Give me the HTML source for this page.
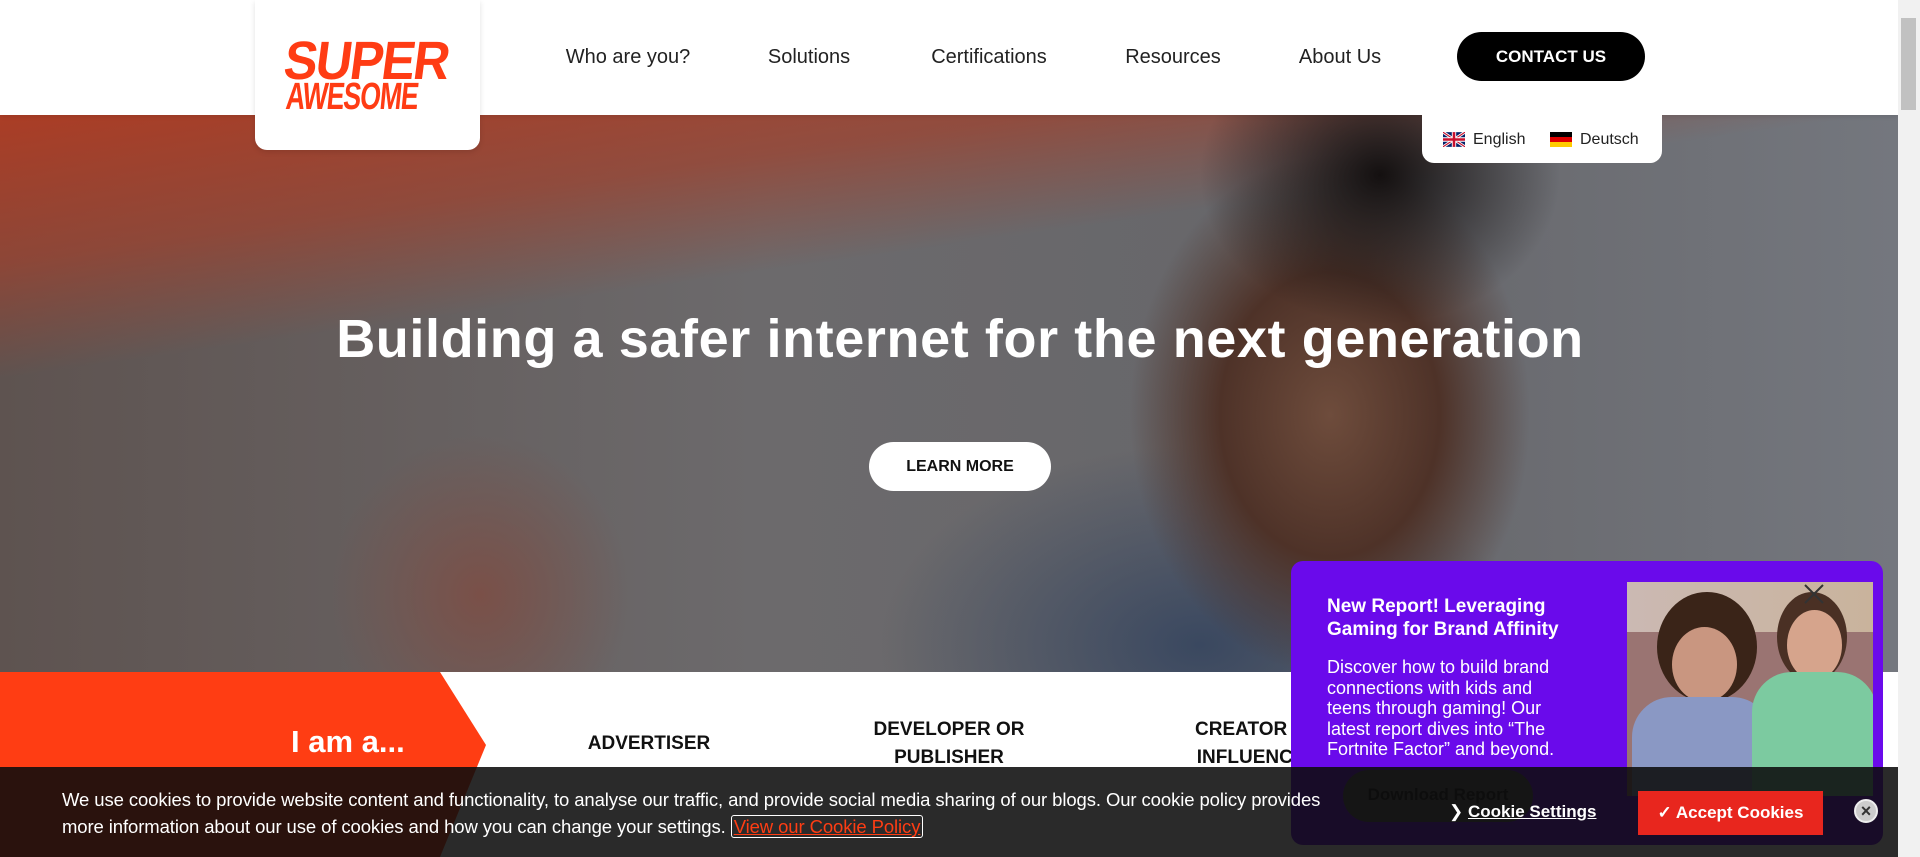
<!DOCTYPE html>
<html><head><meta charset="utf-8"><style>
*{margin:0;padding:0;box-sizing:border-box}
body{width:1920px;height:857px;overflow:hidden;position:relative;font-family:"Liberation Sans",sans-serif;background:#fff}
.hdr{position:absolute;left:0;top:0;width:1898px;height:115px;background:#fff;box-shadow:0 2px 4px rgba(0,0,0,.08);z-index:5}
.logo{position:absolute;left:255px;top:0;width:225px;height:150px;background:#fff;border-radius:0 0 12px 12px;box-shadow:0 2px 6px rgba(0,0,0,.12);z-index:6}
.logo div{position:absolute;left:33px;color:#ff3c14;font-weight:900;transform-origin:left top;white-space:nowrap}
.nav{position:absolute;top:46px;font-size:20px;color:#222;z-index:7;transform:translateX(-50%)}
.cta{position:absolute;left:1457px;top:32px;width:188px;height:49px;background:#000;border-radius:25px;color:#fff;font-weight:bold;font-size:17px;text-align:center;line-height:49px;z-index:7}
.lang{position:absolute;left:1422px;top:115px;width:240px;height:48px;background:#fff;border-radius:0 0 12px 12px;z-index:6;font-size:16px;color:#222}
.hero{position:absolute;left:0;top:115px;width:1898px;height:557px;overflow:hidden;
background:
radial-gradient(ellipse 180px 150px at 1380px 60px,#141010 0%,rgba(20,15,15,0) 100%),
radial-gradient(ellipse 200px 260px at 1330px 300px,#6e4c3c 0%,#4e3228 55%,rgba(60,40,35,0) 100%),
radial-gradient(ellipse 320px 200px at 1200px 530px,#3a4860 0%,rgba(60,70,90,0) 100%),
linear-gradient(172deg,rgba(175,60,35,.95) 0,rgba(160,65,45,.7) 18%,rgba(90,90,95,0) 32%),
radial-gradient(ellipse 150px 160px at 480px 480px,#7a5048 0%,rgba(90,70,70,0) 100%),
linear-gradient(90deg,#5e5350 0,#6c6a6c 40%,#66666a 70%,#74777e 100%)}
.h1{position:absolute;left:0;width:1920px;top:308px;text-align:center;color:#fff;font-weight:bold;font-size:54px;letter-spacing:0.6px;z-index:3}
.learn{position:absolute;left:869px;top:442px;width:182px;height:49px;background:#fff;border-radius:25px;text-align:center;line-height:49px;font-weight:bold;font-size:16px;color:#111;z-index:3}
.band{position:absolute;left:0;top:672px;width:1898px;height:185px;background:#fff}
.orange{position:absolute;left:0;top:672px;width:486px;height:185px;background:#ff3d13;clip-path:polygon(0 0,440px 0,486px 73px,440px 185px,0 185px)}
.iam{position:absolute;left:291px;top:724px;color:#fff;font-weight:bold;font-size:31px}
.cat{position:absolute;font-weight:bold;font-size:19px;color:#111;text-align:center;line-height:28px;transform:translateX(-50%)}
.pop{position:absolute;left:1291px;top:561px;width:592px;height:284px;background:#6a0aeb;border-radius:12px;z-index:8;overflow:hidden}
.pimg{position:absolute;left:336px;top:21px;width:246px;height:214px;background:linear-gradient(90deg,#cbb9b3,#c9b39c);overflow:hidden}
.cookie{position:absolute;left:0;top:767px;width:1898px;height:90px;background:rgba(12,12,12,.88);z-index:9}
.ctext{position:absolute;left:62px;top:19px;color:#fff;font-size:18.5px;line-height:27px;width:1340px;letter-spacing:-0.1px;white-space:nowrap}
.sb{position:absolute;right:0;top:0;width:22px;height:857px;background:#f1f1f1;z-index:10}
</style></head><body>
<div class="hdr"></div>
<div class="logo">
<div style="top:34px;font-size:54px;line-height:54px;transform:scaleX(0.93) skewX(-8deg);letter-spacing:-2px">SUPER</div>
<div style="top:78px;font-size:38px;line-height:38px;transform:scaleX(0.7) skewX(-8deg);letter-spacing:-1.5px">AWESOME</div>
</div>
<div class="nav" style="left:628px">Who are you?</div>
<div class="nav" style="left:809px">Solutions</div>
<div class="nav" style="left:989px">Certifications</div>
<div class="nav" style="left:1173px">Resources</div>
<div class="nav" style="left:1340px">About Us</div>
<div class="cta">CONTACT US</div>
<div class="lang">
<svg style="position:absolute;left:21px;top:17px" width="22" height="15" viewBox="0 0 60 40"><rect width="60" height="40" fill="#012169"/><path d="M0 0L60 40M60 0L0 40" stroke="#fff" stroke-width="8"/><path d="M0 0L60 40M60 0L0 40" stroke="#c8102e" stroke-width="3"/><path d="M30 0V40M0 20H60" stroke="#fff" stroke-width="12"/><path d="M30 0V40M0 20H60" stroke="#c8102e" stroke-width="7"/></svg>
<span style="position:absolute;left:51px;top:16px">English</span>
<svg style="position:absolute;left:128px;top:17px" width="22" height="15"><rect width="22" height="5" fill="#000"/><rect y="5" width="22" height="5" fill="#d00"/><rect y="10" width="22" height="5" fill="#fc0"/></svg>
<span style="position:absolute;left:158px;top:16px">Deutsch</span>
</div>
<div class="hero"></div>
<div class="h1">Building a safer internet for the next generation</div>
<div class="learn">LEARN MORE</div>
<div class="band"></div>
<div class="orange"></div>
<div class="iam">I am a...</div>
<div class="cat" style="left:649px;top:730px">ADVERTISER</div>
<div class="cat" style="left:949px;top:716px">DEVELOPER OR<br>PUBLISHER</div>
<div class="cat" style="left:1258px;top:716px">CREATOR OR<br>INFLUENCER</div>
<div class="pop">
<div style="position:absolute;left:36px;top:34px;color:#fff;font-weight:bold;font-size:19px;line-height:23px">New Report! Leveraging<br>Gaming for Brand Affinity</div>
<div style="position:absolute;left:36px;top:96px;color:#fff;font-size:18px;line-height:20.5px">Discover how to build brand<br>connections with kids and<br>teens through gaming! Our<br>latest report dives into “The<br>Fortnite Factor” and beyond.</div>
<div style="position:absolute;left:52px;top:209px;width:190px;height:52px;border-radius:26px;background:#555"></div>
<div style="position:absolute;left:52px;top:224px;width:190px;text-align:center;font-size:17px;color:#111;font-weight:bold">Download Report</div>
<div class="pimg">
<div style="position:absolute;left:0;top:50px;width:246px;height:170px;background:#9a7472"></div>
<div style="position:absolute;left:30px;top:10px;width:100px;height:110px;border-radius:50%;background:#3a2418"></div>
<div style="position:absolute;left:45px;top:45px;width:65px;height:75px;border-radius:50%;background:#c99680"></div>
<div style="position:absolute;left:5px;top:115px;width:140px;height:110px;border-radius:40px 40px 0 0;background:#8a98c4"></div>
<div style="position:absolute;left:150px;top:10px;width:70px;height:90px;border-radius:50%;background:#4a3024"></div>
<div style="position:absolute;left:160px;top:28px;width:55px;height:70px;border-radius:50%;background:#d6a48c"></div>
<div style="position:absolute;left:125px;top:90px;width:125px;height:140px;border-radius:40px 40px 0 0;background:#7ccaa0"></div>
<svg style="position:absolute;left:175px;top:0" width="24" height="24"><path d="M3 3L21 21M21 3L3 21" stroke="#333" stroke-width="2"/></svg>
</div>
</div>
<div class="cookie">
<div class="ctext">We use cookies to provide website content and functionality, to analyse our traffic, and provide social media sharing of our blogs. Our cookie policy provides<br>more information about our use of cookies and how you can change your settings. <span style="color:#ff3d13;text-decoration:underline;border:1px solid #fff;border-radius:3px;padding:0 2px">View our Cookie Policy</span></div>
<div style="position:absolute;left:1449px;top:35px;color:#fff;font-weight:bold;font-size:17px"><span style="font-weight:normal">❯</span> <span style="text-decoration:underline">Cookie Settings</span></div>
<div style="position:absolute;left:1638px;top:24px;width:185px;height:44px;background:#e8261e;color:#fff;font-weight:bold;font-size:17px;text-align:center;line-height:44px">✓ Accept Cookies</div>
<div style="position:absolute;left:1854px;top:32px;width:24px;height:24px;border-radius:50%;background:#ccc;border:2px solid #eee;color:#333;font-size:18px;text-align:center;line-height:20px;font-weight:bold">×</div>
</div>
<div class="sb"><div style="position:absolute;left:3px;top:18px;width:15px;height:92px;background:#c1c1c1"></div></div>
</body></html>
